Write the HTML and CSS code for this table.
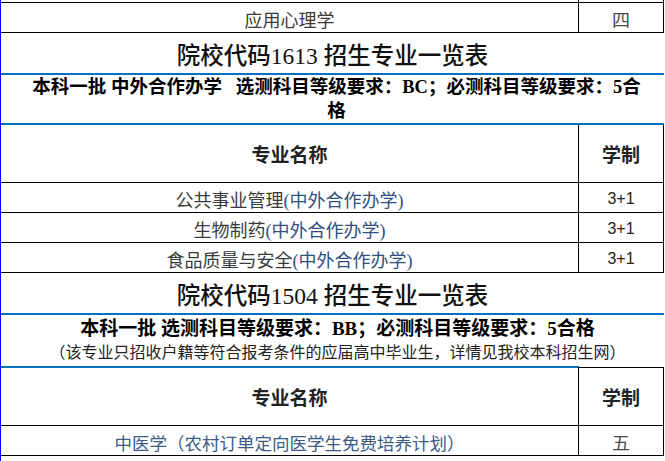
FILE: index.html
```html
<!DOCTYPE html>
<html lang="zh-CN">
<head>
<meta charset="utf-8">
<title>招生专业一览表</title>
<link rel="stylesheet" href="styles.css">
</head>
<body>
<div class="sheet">
  <div class="row sliver"><div class="c1"></div><div class="c2"></div></div>
  <div class="row item"><div class="c1">应用心理学</div><div class="c2 serif">四</div></div>
  <div class="title">院校代码1613 招生专业一览表</div>
  <div class="desc"><span class="desc-main">本科一批&nbsp;中外合作办学&nbsp;&nbsp;&nbsp;选测科目等级要求：BC；必测科目等级要求：5合<br>格</span></div>
  <div class="row head"><div class="c1">专业名称</div><div class="c2">学制</div></div>
  <div class="row item"><div class="c1">公共事业管理<span class="coop">(中外合作办学)</span></div><div class="c2 num">3+1</div></div>
  <div class="row item"><div class="c1">生物制药<span class="coop">(中外合作办学)</span></div><div class="c2 num">3+1</div></div>
  <div class="row item"><div class="c1">食品质量与安全<span class="coop">(中外合作办学)</span></div><div class="c2 num">3+1</div></div>
  <div class="title">院校代码1504 招生专业一览表</div>
  <div class="desc desc2">
    <div class="desc-main">本科一批&nbsp;选测科目等级要求：BB；必测科目等级要求：5合格</div>
    <div class="desc-note">（该专业只招收户籍等符合报考条件的应届高中毕业生，详情见我校本科招生网）</div>
  </div>
  <div class="row head head2"><div class="c1">专业名称</div><div class="c2">学制</div></div>
  <div class="row item"><div class="c1 blue-text">中医学（农村订单定向医学生免费培养计划）</div><div class="c2 serif">五</div></div>
</div>
</body>
</html>
```

FILE: styles.css
```css
html, body {
  margin: 0;
  padding: 0;
  background: #ffffff;
}

.sheet {
  width: 663px;
  height: 461px;
  overflow: hidden;
  border-left: 1px solid #0000ff;
  font-family: "Liberation Serif", "Noto Sans CJK SC", serif;
  color: #000000;
}

.row {
  display: grid;
  grid-template-columns: 578px 85px;
  border-bottom: 1px solid #000000;
}

.row > div {
  box-sizing: border-box;
  border-right: 1px solid #000000;
  display: flex;
  align-items: center;
  justify-content: center;
  white-space: nowrap;
}

.sliver {
  height: 2px;
}

.item {
  height: 29px;
  font-size: 18px;
  color: #3a3a3a;
}

.item > div {
  padding-top: 3px;
}

.coop {
  color: #2f4f7f;
}

.blue-text {
  color: #3b5a86;
  font-size: 17.5px;
}

.num {
  font-family: "Liberation Sans", sans-serif;
  font-size: 16px;
  color: #222222;
}

.serif {
  color: #4a4a4a;
}

.title {
  height: 38px;
  padding-top: 2px;
  border-bottom: 2px solid #0070c0;
  display: flex;
  align-items: center;
  justify-content: center;
  font-size: 23.5px;
  font-weight: 500;
  color: #111111;
}

.desc {
  height: 48px;
  border-bottom: 2px solid #0070c0;
  display: flex;
  flex-direction: column;
  align-items: center;
  justify-content: center;
  text-align: center;
  padding-left: 8px;
}

.desc-main {
  font-size: 18.5px;
  font-weight: bold;
  line-height: 24px;
}

.desc2 {
  height: 51px;
  border-bottom: none;
  padding-left: 10px;
}

.desc2 .desc-main {
  font-size: 19px;
}

.desc-note {
  font-size: 16px;
  line-height: 24px;
  color: #222222;
}

.head {
  height: 57px;
  font-size: 19px;
  font-weight: bold;
  color: #222222;
}

.head2 {
  height: 60px;
  box-sizing: border-box;
}

.head2 > .c1 {
  border-top: 2px solid #0070c0;
}

.head2 > .c2 {
  border-top: 1px solid #000000;
  margin-top: 1px;
}
```
